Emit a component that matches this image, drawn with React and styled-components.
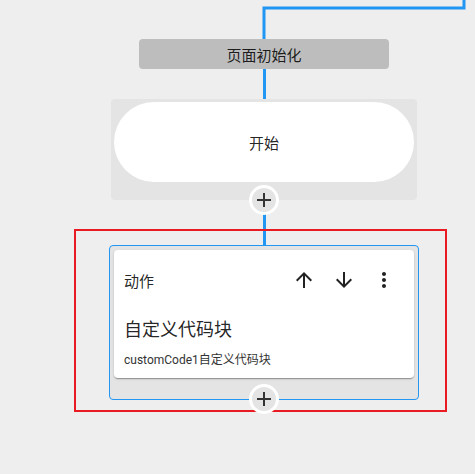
import styled, { createGlobalStyle } from 'styled-components';

const GlobalStyle = createGlobalStyle`
  html, body {
    margin: 0;
    padding: 0;
    background: #eeeeee;
  }
  body {
    font-family: Roboto, "Noto Sans CJK SC", sans-serif;
    color: rgba(0, 0, 0, 0.87);
  }
`;

const BLUE = '#2196f3';

function AddIcon() {
  return (
    <svg width="24" height="24" viewBox="0 0 24 24" fill="#333">
      <path d="M19 13h-6v6h-2v-6H5v-2h6V5h2v6h6v2z" />
    </svg>
  );
}

function ArrowUp() {
  return (
    <svg width="24" height="24" viewBox="0 0 24 24" fill="#222">
      <path d="M4 12l1.41 1.41L11 7.83V20h2V7.83l5.58 5.59L20 12l-8-8-8 8z" />
    </svg>
  );
}

function ArrowDown() {
  return (
    <svg width="24" height="24" viewBox="0 0 24 24" fill="#222">
      <path d="M20 12l-1.41-1.41L13 16.17V4h-2v12.17l-5.58-5.59L4 12l8 8 8-8z" />
    </svg>
  );
}

function MoreVert() {
  return (
    <svg width="24" height="24" viewBox="0 0 24 24" fill="#222">
      <path d="M12 8c1.1 0 2-.9 2-2s-.9-2-2-2-2 .9-2 2 .9 2 2 2zm0 2c-1.1 0-2 .9-2 2s.9 2 2 2 2-.9 2-2-.9-2-2-2zm0 6c-1.1 0-2 .9-2 2s.9 2 2 2 2-.9 2-2-.9-2-2-2z" />
    </svg>
  );
}

function AddButton() {
  return (
    <AddCircle>
      <AddIcon />
    </AddCircle>
  );
}

export default function App() {
  return (
    <>
      <GlobalStyle />
      <Canvas>
        <svg width="475" height="39" style={{ display: 'block' }}>
          <path d="M464 0 V8 H264 V39" fill="none" stroke={BLUE} strokeWidth="3" />
        </svg>
        <EventBox>页面初始化</EventBox>
        <Connector h={30} />
        <StartGroup>
          <StartPill>开始</StartPill>
          <AddButton />
        </StartGroup>
        <Connector h={45} />
        <ActionNode>
          <Card>
            <CardHeader>
              <CardType>动作</CardType>
              <Tools>
                <IconBtn><ArrowUp /></IconBtn>
                <IconBtn><ArrowDown /></IconBtn>
                <IconBtn><MoreVert /></IconBtn>
              </Tools>
            </CardHeader>
            <CardTitle>自定义代码块</CardTitle>
            <CardSub>customCode1自定义代码块</CardSub>
          </Card>
          <AddButton />
        </ActionNode>
      </Canvas>
    </>
  );
}

// ---------------------- Styled components ----------------------

const Canvas = styled.div`
  width: 475px;
  height: 474px;
  overflow: hidden;
  display: flex;
  flex-direction: column;
`;

const EventBox = styled.div`
  margin-left: 139px;
  width: 250px;
  height: 30px;
  background: #bdbdbd;
  border-radius: 4px;
  display: flex;
  align-items: center;
  justify-content: center;
  font-size: 15px;
`;

const Connector = styled.div`
  margin-left: 263px;
  width: 3px;
  height: ${({ h }) => h}px;
  background: ${BLUE};
`;

const StartGroup = styled.div`
  position: relative;
  margin-left: 111px;
  width: 306px;
  height: 101px;
  box-sizing: border-box;
  padding: 3px 3px 0;
  background: #e4e4e4;
  border-radius: 4px;
`;

const StartPill = styled.div`
  height: 80px;
  border-radius: 40px;
  background: #fff;
  display: flex;
  align-items: center;
  justify-content: center;
  font-size: 15px;
`;

const AddCircle = styled.div`
  position: absolute;
  left: 50%;
  bottom: 0;
  transform: translate(-50%, 50%);
  width: 30px;
  height: 30px;
  box-sizing: border-box;
  border: 3px solid #fff;
  border-radius: 50%;
  background: #e4e4e4;
  display: flex;
  align-items: center;
  justify-content: center;
  z-index: 2;
`;

const ActionNode = styled.div`
  position: relative;
  margin-left: 109px;
  width: 310px;
  height: 155px;
  box-sizing: border-box;
  border: 1px solid ${BLUE};
  border-radius: 4px;
  background: #e4e4e4;
  padding: 4px 4px 0;

  &::after {
    content: '';
    position: absolute;
    left: -36px;
    top: -17px;
    right: -29px;
    bottom: -13px;
    border: 2px solid #e81b23;
    pointer-events: none;
  }
`;

const Card = styled.div`
  height: 128px;
  box-sizing: border-box;
  background: #fff;
  border-radius: 4px;
  box-shadow: 0 2px 1px -1px rgba(0, 0, 0, 0.2), 0 1px 1px 0 rgba(0, 0, 0, 0.14), 0 1px 3px 0 rgba(0, 0, 0, 0.12);
  padding: 10px 10px 0 10px;
`;

const CardHeader = styled.div`
  display: flex;
  align-items: center;
  justify-content: space-between;
  height: 40px;
`;

const CardType = styled.span`
  font-size: 15px;
`;

const Tools = styled.div`
  display: flex;
`;

const IconBtn = styled.div`
  width: 40px;
  height: 40px;
  display: flex;
  align-items: center;
  justify-content: center;
`;

const CardTitle = styled.div`
  margin-top: 18px;
  font-size: 18px;
  line-height: 24px;
`;

const CardSub = styled.div`
  margin-top: 9px;
  font-size: 12px;
  line-height: 18px;
  color: #333;
`;
